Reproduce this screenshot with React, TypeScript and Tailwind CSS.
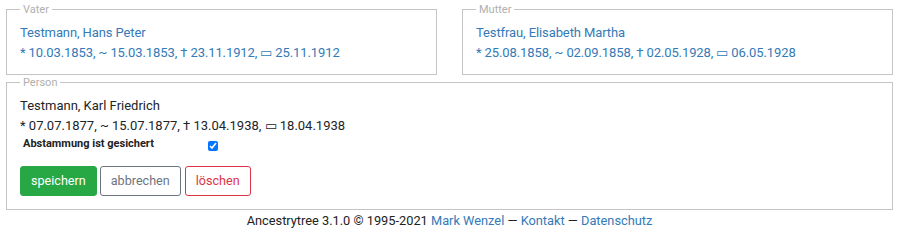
import React from 'react';

interface Relative {
  role: string;
  name: string;
  dates: string;
}

const parents: Relative[] = [
  {
    role: 'Vater',
    name: 'Testmann, Hans Peter',
    dates: '* 10.03.1853, ~ 15.03.1853, † 23.11.1912, ▭ 25.11.1912',
  },
  {
    role: 'Mutter',
    name: 'Testfrau, Elisabeth Martha',
    dates: '* 25.08.1858, ~ 02.09.1858, † 02.05.1928, ▭ 06.05.1928',
  },
];

function Box({ legend, children }: { legend: string; children: React.ReactNode }) {
  return (
    <fieldset className="border border-[#c4c4c4] px-[13px] pt-[7px] pb-[12px] min-w-0">
      <legend className="px-[3px] text-[11px] leading-[13px] text-[#b0b0b0]">{legend}</legend>
      {children}
    </fieldset>
  );
}

export default function App() {
  return (
    <div
      className="bg-white text-[13px] leading-[19.5px] text-[#212529] pl-[6px] pr-[8px] pt-[3px]"
      style={{ fontFamily: 'Roboto, "Liberation Sans", sans-serif' }}
    >
      <div className="grid grid-cols-2 gap-[25px]">
        {parents.map((p) => (
          <Box key={p.role} legend={p.role}>
            <div className="text-[#337ab7] tracking-[-0.1px]">{p.name}</div>
            <div className="text-[#337ab7] tracking-[-0.1px]">{p.dates}</div>
          </Box>
        ))}
      </div>

      <div className="mt-[1px]">
        <fieldset className="border border-[#c4c4c4] px-[13px] pt-[7px] pb-[13px] min-w-0">
          <legend className="px-[3px] text-[11px] leading-[13px] text-[#b0b0b0]">Person</legend>
          <div>Testmann, Karl Friedrich</div>
          <div>* 07.07.1877, ~ 15.07.1877, † 13.04.1938, ▭ 18.04.1938</div>
          <div className="flex items-center ml-[3px] h-[18px]">
            <span className="w-[185px] text-[11px] font-bold text-[#222]">Abstammung ist gesichert</span>
            <input type="checkbox" defaultChecked className="w-[10px] h-[10px] m-0 mt-[3px] accent-[#0075ff]" />
          </div>
          <div className="flex gap-[3px] mt-[13px] text-[12.6px]">
            <button className="h-[30px] px-[10px] rounded-[3px] bg-[#28a745] border border-[#28a745] text-white">
              speichern
            </button>
            <button className="h-[30px] px-[10px] rounded-[3px] border border-[#6c757d] text-[#6c757d]">
              abbrechen
            </button>
            <button className="h-[30px] px-[10px] rounded-[3px] border border-[#dc3545] text-[#dc3545] ml-[1px]">
              löschen
            </button>
          </div>
        </fieldset>
      </div>

      <footer className="text-center text-[12.8px] text-[#222] mt-[1px]">
        Ancestrytree 3.1.0 © 1995-2021 <a className="text-[#337ab7]">Mark Wenzel</a> —{' '}
        <a className="text-[#337ab7]">Kontakt</a> — <a className="text-[#337ab7]">Datenschutz</a>
      </footer>
    </div>
  );
}
